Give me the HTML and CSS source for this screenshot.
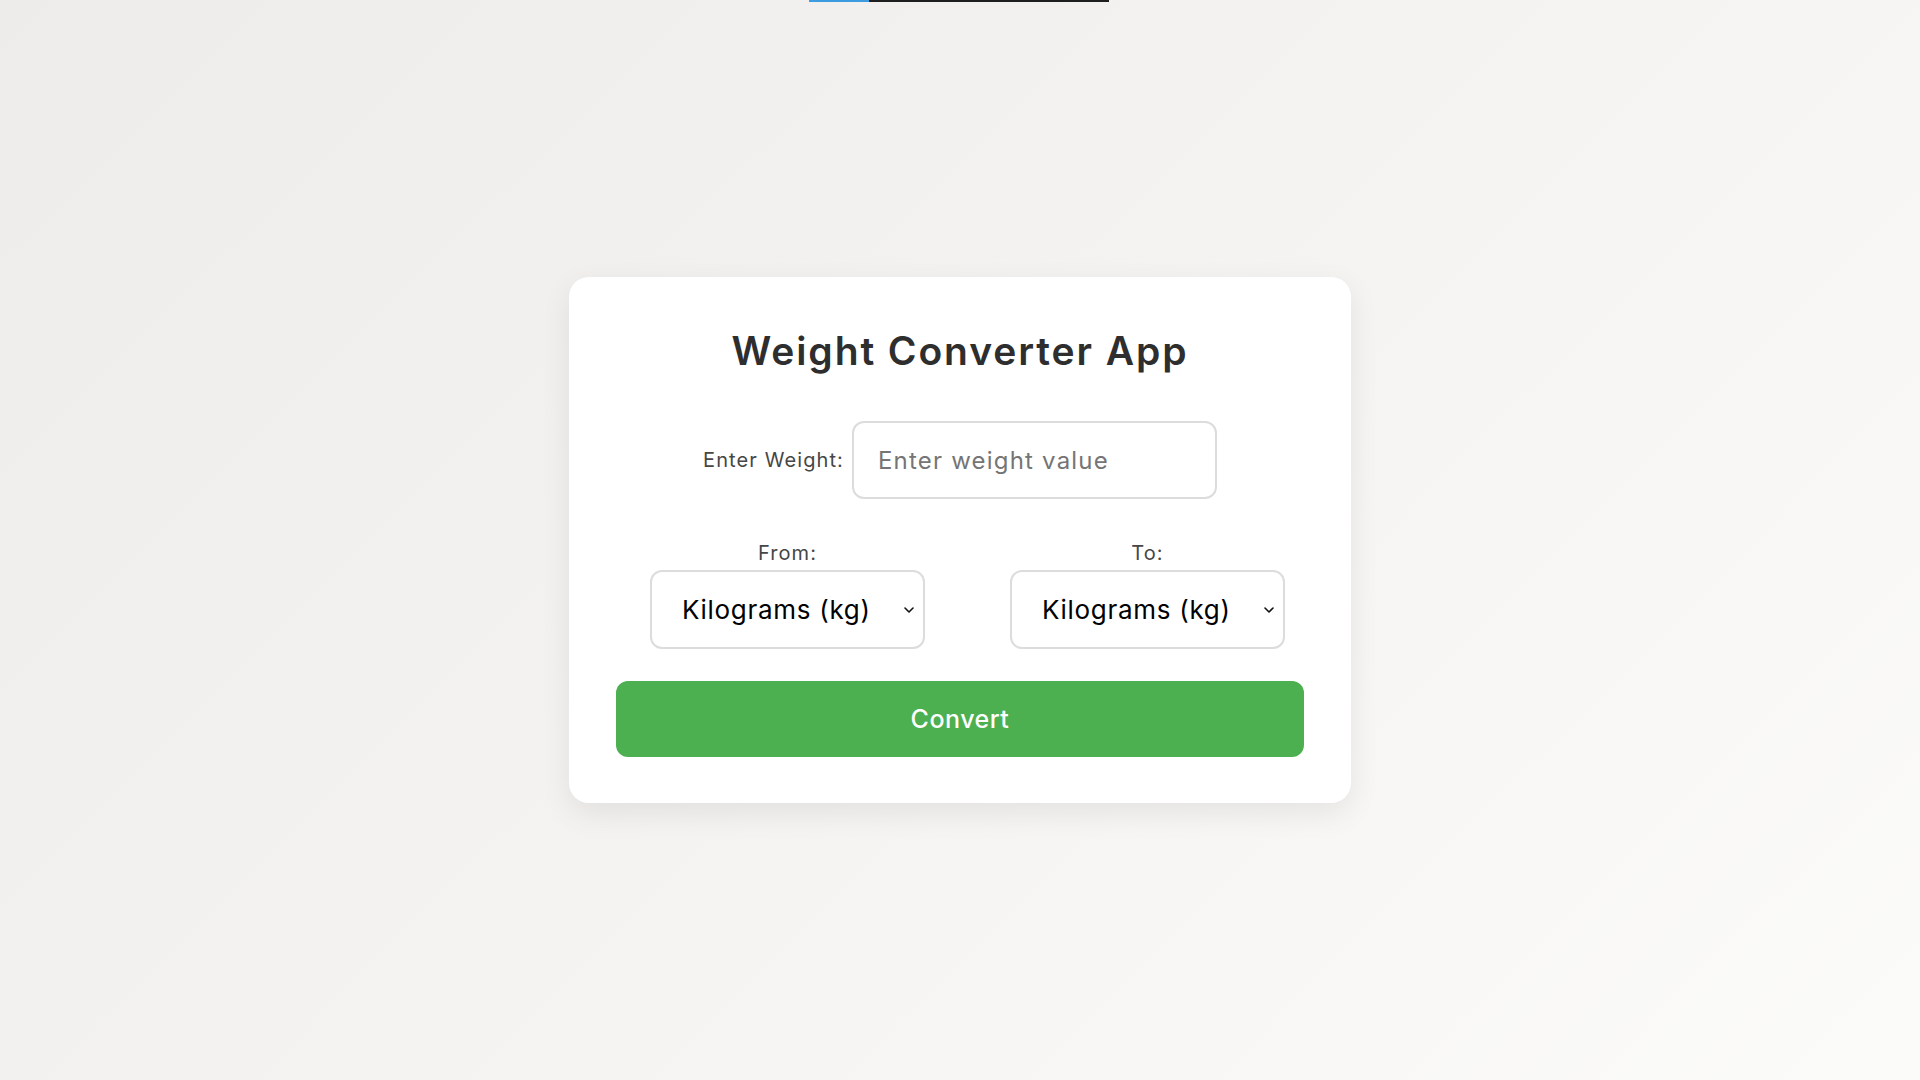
FILE: index.html
```html
<!DOCTYPE html>
<html lang="en">
<head>
<meta charset="utf-8">
<title>Weight Converter App</title>
<link rel="stylesheet" href="styles.css">
</head>
<body>
<div class="topbar"><span class="topbar-blue"></span><span class="topbar-black"></span></div>
<main class="card">
  <h1 class="title">Weight Converter App</h1>
  <div class="input-row">
    <label class="label" for="weight">Enter Weight:</label>
    <input class="weight-input" id="weight" type="text" placeholder="Enter weight value">
  </div>
  <div class="units">
    <div class="unit-group">
      <label class="label" for="from">From:</label>
      <div class="select-wrap">
        <select class="unit-select" id="from">
          <option>Kilograms (kg)</option>
        </select>
        <svg class="chev" width="10" height="6" viewBox="0 0 10 6"><path d="M1 1 L5 5 L9 1" fill="none" stroke="#111" stroke-width="1.6" stroke-linecap="round" stroke-linejoin="round"/></svg>
      </div>
    </div>
    <div class="unit-group">
      <label class="label" for="to">To:</label>
      <div class="select-wrap">
        <select class="unit-select" id="to">
          <option>Kilograms (kg)</option>
        </select>
        <svg class="chev" width="10" height="6" viewBox="0 0 10 6"><path d="M1 1 L5 5 L9 1" fill="none" stroke="#111" stroke-width="1.6" stroke-linecap="round" stroke-linejoin="round"/></svg>
      </div>
    </div>
  </div>
  <button class="convert-btn" type="button">Convert</button>
</main>
</body>
</html>
```

FILE: styles.css
```css
* { box-sizing: border-box; }

html, body { height: 100%; }

body {
  margin: 0;
  font-family: Inter, "Open Sans", sans-serif;
  background: linear-gradient(135deg, #eeecea 0%, #f4f3f2 50%, #fbfbfa 100%);
  display: flex;
  align-items: center;
  justify-content: center;
  min-height: 100vh;
}

.topbar {
  position: absolute;
  top: 0;
  left: 809px;
  display: flex;
  height: 2px;
}
.topbar-blue { width: 60px; background: #3d9be0; }
.topbar-black { width: 240px; background: #1e1e1e; }

.card {
  width: 782px;
  background: #ffffff;
  border-radius: 20px;
  padding: 48px 47px 46px;
  box-shadow: 0 10px 30px rgba(0, 0, 0, 0.08);
  display: flex;
  flex-direction: column;
  align-items: stretch;
}

.title {
  margin: 0;
  padding-top: 2px;
  font-size: 39px;
  line-height: 48px;
  font-weight: 600;
  letter-spacing: 1.9px;
  color: #2e2e2e;
  text-align: center;
}

.input-row {
  margin-top: 46px;
  display: flex;
  align-items: center;
  justify-content: center;
  gap: 8px;
}

.label {
  font-size: 20px;
  line-height: 24px;
  color: #464646;
  letter-spacing: 1.1px;
}

.weight-input {
  width: 365px;
  height: 78px;
  border: 2px solid #dcdcdc;
  border-radius: 12px;
  padding: 0 24px;
  font-family: inherit;
  font-size: 24px;
  letter-spacing: 1.2px;
  color: #333;
  outline: none;
  background: #fff;
}
.weight-input::placeholder { color: #757575; }

.units {
  margin-top: 42px;
  margin-left: 34px;
  display: flex;
  gap: 85px;
}

.unit-group {
  display: flex;
  flex-direction: column;
  align-items: center;
  gap: 5px;
}

.select-wrap { position: relative; }

.unit-select {
  -webkit-appearance: none;
  appearance: none;
  width: 275px;
  height: 79px;
  border: 2px solid #dcdcdc;
  border-radius: 12px;
  background: #fff;
  padding: 0 0 0 30px;
  font-family: inherit;
  font-size: 26px;
  letter-spacing: 0.7px;
  color: #000;
  outline: none;
}

.chev {
  position: absolute;
  right: 11px;
  top: 37px;
  pointer-events: none;
}

.convert-btn {
  margin-top: 32px;
  height: 76px;
  border: none;
  border-radius: 12px;
  background: #4caf50;
  color: #fff;
  font-family: inherit;
  font-size: 25px;
  letter-spacing: 0.5px;
  font-weight: 500;
  cursor: pointer;
}
```
